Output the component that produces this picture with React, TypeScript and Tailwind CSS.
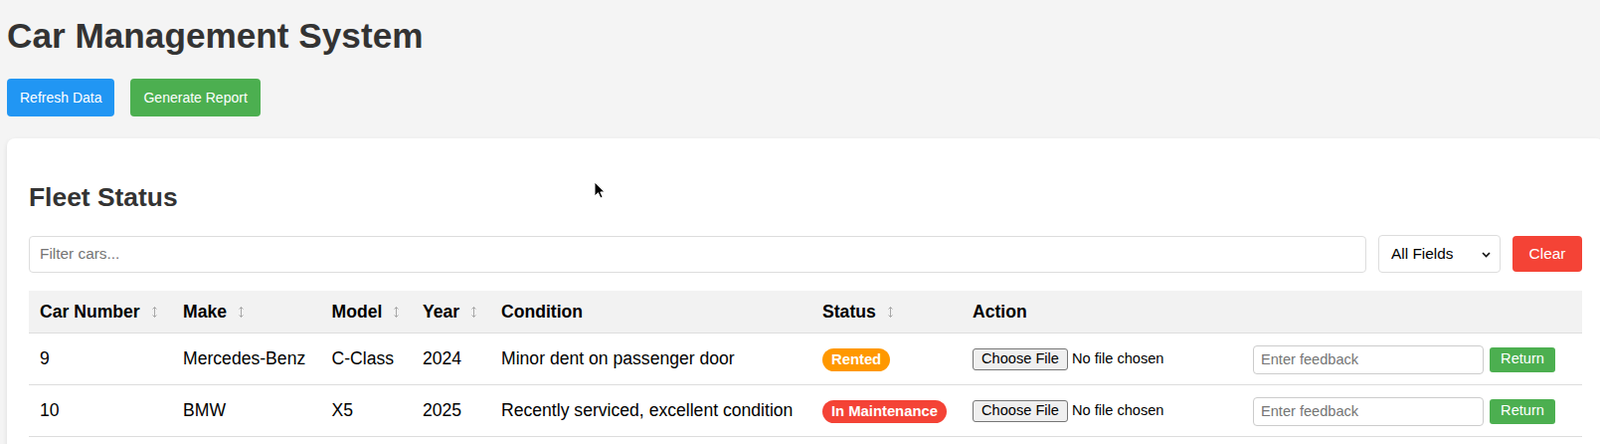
import { useState } from "react";

type Car = {
    id: number;
    make: string;
    model: string;
    year: number;
    condition: string;
    status: "Rented" | "In Maintenance" | "Available";
};

const cars: Car[] = [
    { id: 9, make: "Mercedes-Benz", model: "C-Class", year: 2024, condition: "Minor dent on passenger door", status: "Rented" },
    { id: 10, make: "BMW", model: "X5", year: 2025, condition: "Recently serviced, excellent condition", status: "In Maintenance" },
];

const statusColor: Record<Car["status"], string> = {
    Rented: "bg-[#ff9800]",
    "In Maintenance": "bg-[#f44336]",
    Available: "bg-[#4caf50]",
};

const SortIcon = () => (
    <svg width="7" height="13" viewBox="0 0 7 13" className="ml-[11px] inline-block" fill="none" stroke="#a8a8a8" strokeWidth="1">
        <path d="M3.5 1.5v10M1.5 3.5l2-2 2 2M1.5 9.5l2 2 2-2" />
    </svg>
);

const Pointer = () => (
    <svg width="12" height="18" viewBox="0 0 12 18" className="absolute left-[597px] top-[182px]">
        <path d="M1 1v14l3.5-3.3 2.4 5.3 2.2-1-2.3-5.1H11z" fill="#000" stroke="#fff" strokeWidth="1" />
    </svg>
);

const FileField = () => (
    <div className="flex items-center">
        <span className="h-[22px] w-[96px] flex items-center justify-center border border-[#767676] bg-[#efefef] rounded-[3px] text-[14.6px] text-black">Choose File</span>
        <span className="ml-[4px] text-[14.6px] text-black">No file chosen</span>
    </div>
);

const CarRow = ({ car }: { car: Car }) => (
    <tr className="h-[52px] border-b border-[#dddddd]">
        <td className="px-[11px]">{car.id}</td>
        <td className="px-[11px]">{car.make}</td>
        <td className="px-[11px]">{car.model}</td>
        <td className="px-[11px]">{car.year}</td>
        <td className="px-[11px]">{car.condition}</td>
        <td className="px-[11px]">
            <span className={`${statusColor[car.status]} inline-block rounded-full px-[9px] py-[3px] text-[14.8px] leading-[17px] font-bold text-white`}>{car.status}</span>
        </td>
        <td className="px-[11px] pt-[2px]"><FileField /></td>
        <td className="px-[11px] pt-[2px]">
            <div className="flex items-center">
                <input placeholder="Enter feedback" className="w-[232px] h-[29px] border border-[#cccccc] rounded-[4px] px-[7px] text-[14.6px] placeholder:text-[#757575] outline-none" />
                <button className="ml-[6px] w-[66px] h-[25px] bg-[#4caf50] text-white text-[14.6px] rounded-[3px]">Return</button>
            </div>
        </td>
    </tr>
);

const App = () => {
    const [filter, setFilter] = useState("");

    return (
        <div className="relative h-screen overflow-hidden bg-[#f4f4f4] font-['Liberation_Sans',Arial,sans-serif]">
            <div className="pt-[16px] pl-[7px]">
                <h1 className="text-[35.2px] leading-[40px] font-bold text-[#333333]">Car Management System</h1>
                <div className="mt-[23px] flex gap-[16px]">
                    <button className="h-[38px] px-[13px] bg-[#2196f3] text-white text-[14px] rounded-[4px]">Refresh Data</button>
                    <button className="h-[38px] px-[13px] bg-[#4caf50] text-white text-[14px] rounded-[4px]">Generate Report</button>
                </div>
            </div>
            <section className="ml-[7px] mt-[22px] w-[1606px] shrink-0 bg-white rounded-lg shadow-[0_2px_5px_rgba(0,0,0,0.1)] p-[22px]">
                <h2 className="mt-[22px] text-[26.4px] leading-[30px] font-bold text-[#333333]">Fleet Status</h2>
                <div className="mt-[23px] flex items-center gap-[12px]">
                    <input
                        value={filter}
                        onChange={(e) => setFilter(e.target.value)}
                        placeholder="Filter cars..."
                        className="flex-1 h-[37px] border border-[#dddddd] rounded-[4px] px-[10px] text-[15.4px] placeholder:text-[#757575] outline-none"
                    />
                    <div className="relative w-[123px] h-[38px] border border-[#dddddd] rounded-[4px] bg-white flex items-center pl-[12px] text-[15.4px] text-black">
                        All Fields
                        <svg width="9" height="6" viewBox="0 0 9 6" className="absolute right-[9px] top-[16px]" fill="none" stroke="#111" strokeWidth="1.6">
                            <path d="M1 1l3.5 3.5L8 1" />
                        </svg>
                    </div>
                    <button className="w-[70px] h-[36px] bg-[#f44336] text-white text-[15.4px] rounded-[4px]">Clear</button>
                </div>
                <table className="mt-[18px] w-full table-fixed border-collapse text-left text-[17.6px] text-black">
                    <thead>
                        <tr className="h-[42px] bg-[#f2f2f2] border-b border-[#dddddd]">
                            <th className="w-[144px] px-[11px] font-bold">Car Number<SortIcon /></th>
                            <th className="w-[149.5px] px-[11px] font-bold">Make<SortIcon /></th>
                            <th className="w-[91.5px] px-[11px] font-bold">Model<SortIcon /></th>
                            <th className="w-[79px] px-[11px] font-bold">Year<SortIcon /></th>
                            <th className="w-[323px] px-[11px] font-bold">Condition</th>
                            <th className="w-[151px] px-[11px] font-bold">Status<SortIcon /></th>
                            <th className="w-[282px] px-[11px] font-bold">Action</th>
                            <th className="px-[11px]"></th>
                        </tr>
                    </thead>
                    <tbody>
                        {cars.map((car) => (
                            <CarRow key={car.id} car={car} />
                        ))}
                    </tbody>
                </table>
            </section>
            <Pointer />
        </div>
    );
};

export default App;
